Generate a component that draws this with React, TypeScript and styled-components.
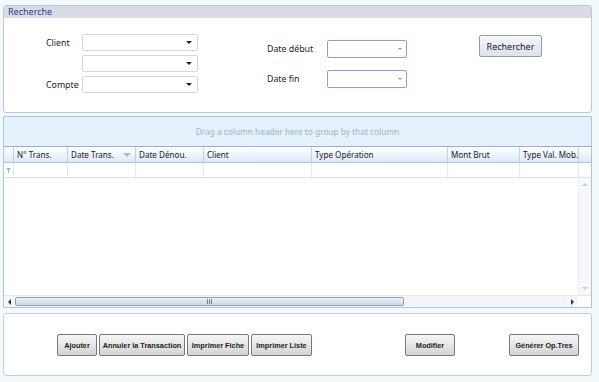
import React from 'react';
import styled, { createGlobalStyle } from 'styled-components';

const GlobalStyle = createGlobalStyle`
  html, body {
    margin: 0;
    padding: 0;
    background: #f3fafd;
  }
  body {
    font-family: 'Noto Sans', 'Liberation Sans', sans-serif;
    font-size: 9px;
    color: #1a1a1a;
  }
`;

const Page = styled.div`
  width: 599px;
  height: 382px;
  box-sizing: border-box;
  padding: 5px 7px 4px 3px;
  display: flex;
  flex-direction: column;
  background: #f3fafd;
`;

const GroupBox = styled.section`
  height: 108px;
  box-sizing: border-box;
  border: 1px solid #c3c6cf;
  border-radius: 3px;
  background: #fff;
  display: flex;
  flex-direction: column;
  overflow: hidden;
`;

const GroupHeader = styled.div`
  height: 12px;
  background: #d9dce6;
  color: #23408e;
  font-size: 9px;
  line-height: 12px;
  padding-left: 4px;
`;

const SearchBody = styled.div`
  display: flex;
  align-items: flex-start;
`;

const FieldGrid = styled.div<{ $label: number; $field: number; $gap: number; $left: number; $top: number }>`
  display: grid;
  grid-template-columns: ${(p) => p.$label}px ${(p) => p.$field}px;
  row-gap: ${(p) => p.$gap}px;
  align-items: center;
  margin-left: ${(p) => p.$left}px;
  margin-top: ${(p) => p.$top}px;
`;

const Label = styled.span`
  font-size: 8.8px;
  color: #222;
  white-space: nowrap;
`;

const Combo = styled.div<{ $date?: boolean }>`
  height: ${(p) => (p.$date ? 18 : 17)}px;
  box-sizing: border-box;
  border: 1px solid ${(p) => (p.$date ? '#86a4d0' : '#d3d6dc')};
  border-radius: 2px;
  background: #fff;
  display: flex;
  align-items: center;
  justify-content: flex-end;
  padding-right: ${(p) => (p.$date ? 4 : 5)}px;
  &::after {
    content: '';
    border-left: ${(p) => (p.$date ? 2 : 3)}px solid transparent;
    border-right: ${(p) => (p.$date ? 2 : 3)}px solid transparent;
    border-top: ${(p) => (p.$date ? 2 : 3)}px solid ${(p) => (p.$date ? '#8a9bb3' : '#222')};
  }
`;

const Spacer = styled.span``;

const SearchButton = styled.button`
  margin-left: 72px;
  margin-top: 17px;
  width: 63px;
  height: 22px;
  border: 1px solid #8f9db3;
  border-radius: 2px;
  background: linear-gradient(#f7f8fa, #e7ebf1 50%, #dde3ec);
  font-family: 'Noto Sans', 'Liberation Sans', sans-serif;
  font-size: 9px;
  color: #1a1a1a;
  padding: 0;
`;

const GridPanel = styled.section`
  margin-top: 3px;
  height: 192px;
  box-sizing: border-box;
  border: 1px solid #a9c4e6;
  background: #fff;
  display: flex;
  flex-direction: column;
`;

const GroupArea = styled.div`
  height: 30px;
  background: #e5f1fb;
  color: #9db2d3;
  font-size: 8.3px;
  display: flex;
  align-items: center;
  justify-content: center;
  border-bottom: 1px solid #8fb0dc;
  box-sizing: border-box;
`;

const cols = '10px 54px 68px 68px 108px 136px 72px 59px 1fr';

const HeaderRow = styled.div`
  display: grid;
  grid-template-columns: ${cols};
  height: 16px;
  background: linear-gradient(#ffffff, #f1f6fd 45%, #dde9f8);
  border-bottom: 1px solid #a6c2e8;
  box-sizing: border-box;
`;

const HeaderCell = styled.div<{ $sorted?: boolean }>`
  position: relative;
  border-right: 1px solid #bcd0ea;
  font-size: 8.1px;
  line-height: 15px;
  padding-left: 3px;
  white-space: nowrap;
  overflow: hidden;
  color: #1a1a1a;
  &:last-child {
    border-right: none;
  }
  ${(p) =>
    p.$sorted &&
    `&::after {
      content: '';
      position: absolute;
      right: 4px;
      top: 6px;
      border-left: 4px solid transparent;
      border-right: 4px solid transparent;
      border-top: 4px solid #9bbbe3;
    }`}
`;

const FilterRow = styled.div`
  display: grid;
  grid-template-columns: ${cols};
  height: 15px;
  border-bottom: 1px solid #d4e1f1;
  box-sizing: border-box;
`;

const FilterCell = styled.div`
  border-right: 1px solid #dfe8f3;
  display: flex;
  align-items: center;
  justify-content: center;
  &:last-child {
    border-right: none;
  }
`;

const BodyRow = styled.div`
  flex: 1;
  display: flex;
`;

const Rows = styled.div`
  flex: 1;
`;

const VScroll = styled.div`
  width: 12px;
  background: #f7f8f9;
  border-left: 1px solid #eceef0;
  display: flex;
  flex-direction: column;
  justify-content: space-between;
  align-items: center;
  padding: 5px 0 5px;
`;

const Arrow = styled.span<{ $dir: 'up' | 'down' | 'left' | 'right'; $color: string }>`
  width: 0;
  height: 0;
  ${(p) =>
    p.$dir === 'up'
      ? `border-left: 3px solid transparent; border-right: 3px solid transparent; border-bottom: 3px solid ${p.$color};`
      : p.$dir === 'down'
        ? `border-left: 3px solid transparent; border-right: 3px solid transparent; border-top: 3px solid ${p.$color};`
        : p.$dir === 'left'
          ? `border-top: 3px solid transparent; border-bottom: 3px solid transparent; border-right: 3px solid ${p.$color};`
          : `border-top: 3px solid transparent; border-bottom: 3px solid transparent; border-left: 3px solid ${p.$color};`}
`;

const HScroll = styled.div`
  height: 11px;
  display: flex;
  align-items: center;
  background: #f4f6f8;
  border-top: 1px solid #e4e8ec;
`;

const ArrowSlot = styled.div`
  width: 11px;
  display: flex;
  justify-content: center;
`;

const Track = styled.div`
  flex: 1;
  height: 9px;
  display: flex;
  background: repeating-linear-gradient(90deg, #eef1f4 0 1px, #f7f8fa 1px 2px);
`;

const Thumb = styled.div`
  width: 389px;
  box-sizing: border-box;
  border: 1px solid #8d9fbd;
  border-radius: 2px;
  background: linear-gradient(#eef2f7, #dce4ee 50%, #c9d6e6);
  display: flex;
  align-items: center;
  justify-content: center;
  gap: 1px;
`;

const Grip = styled.span`
  width: 1px;
  height: 5px;
  background: #6f7f99;
`;

const Corner = styled.div`
  width: 13px;
  height: 100%;
  background: #fff;
`;

const ActionPanel = styled.section`
  margin-top: 5px;
  height: 63px;
  box-sizing: border-box;
  border: 1px solid #c9cbd0;
  border-radius: 3px;
  background: #fff;
  display: flex;
  align-items: flex-start;
  padding-top: 20px;
`;

const ActionButton = styled.button<{ $w: number; $ml: number }>`
  width: ${(p) => p.$w}px;
  height: 22px;
  margin-left: ${(p) => p.$ml}px;
  padding: 0;
  border: 1px solid #777;
  border-radius: 2px;
  background: linear-gradient(#f6f6f6, #e6e6e6 50%, #d3d3d3);
  font-family: 'Liberation Sans', Arial, sans-serif;
  font-weight: bold;
  font-size: 7.3px;
  color: #1d1d1d;
  white-space: nowrap;
`;

const Funnel = () => (
  <svg width="5" height="5" viewBox="0 0 5 5">
    <path d="M0 0 H5 L3 2 V5 H2 V2 Z" fill="#8fb0d8" />
  </svg>
);

const columns = [
  { t: '', s: false },
  { t: 'N° Trans.', s: false },
  { t: 'Date Trans.', s: true },
  { t: 'Date Dénou.', s: false },
  { t: 'Client', s: false },
  { t: 'Type Opération', s: false },
  { t: 'Mont Brut', s: false },
  { t: 'Type Val. Mob.', s: false },
  { t: '', s: false },
];

const actions = [
  { label: 'Ajouter', w: 40, ml: 53 },
  { label: 'Annuler la Transaction', w: 86, ml: 2 },
  { label: 'Imprimer Fiche', w: 62, ml: 2 },
  { label: 'Imprimer Liste', w: 61, ml: 2 },
  { label: 'Modifier', w: 50, ml: 93 },
  { label: 'Générer Op.Tres', w: 70, ml: 54 },
];

export default function App() {
  return (
    <>
      <GlobalStyle />
      <Page>
        <GroupBox>
          <GroupHeader>Recherche</GroupHeader>
          <SearchBody>
            <FieldGrid $label={36} $field={116} $gap={4} $left={42} $top={16}>
              <Label>Client</Label>
              <Combo />
              <Spacer />
              <Combo />
              <Label>Compte</Label>
              <Combo />
            </FieldGrid>
            <FieldGrid $label={60} $field={80} $gap={12} $left={69} $top={22}>
              <Label>Date début</Label>
              <Combo $date />
              <Label>Date fin</Label>
              <Combo $date />
            </FieldGrid>
            <SearchButton>Rechercher</SearchButton>
          </SearchBody>
        </GroupBox>

        <GridPanel>
          <GroupArea>Drag a column header here to group by that column</GroupArea>
          <HeaderRow>
            {columns.map((c, i) => (
              <HeaderCell key={i} $sorted={c.s}>
                {c.t}
              </HeaderCell>
            ))}
          </HeaderRow>
          <FilterRow>
            {columns.map((_, i) => (
              <FilterCell key={i}>{i === 0 && <Funnel />}</FilterCell>
            ))}
          </FilterRow>
          <BodyRow>
            <Rows />
            <VScroll>
              <Arrow $dir="up" $color="#c9ccd1" />
              <Arrow $dir="down" $color="#c9ccd1" />
            </VScroll>
          </BodyRow>
          <HScroll>
            <ArrowSlot>
              <Arrow $dir="left" $color="#333" />
            </ArrowSlot>
            <Track>
              <Thumb>
                <Grip />
                <Grip />
                <Grip />
              </Thumb>
            </Track>
            <ArrowSlot>
              <Arrow $dir="right" $color="#333" />
            </ArrowSlot>
            <Corner />
          </HScroll>
        </GridPanel>

        <ActionPanel>
          {actions.map((a) => (
            <ActionButton key={a.label} $w={a.w} $ml={a.ml}>
              {a.label}
            </ActionButton>
          ))}
        </ActionPanel>
      </Page>
    </>
  );
}
